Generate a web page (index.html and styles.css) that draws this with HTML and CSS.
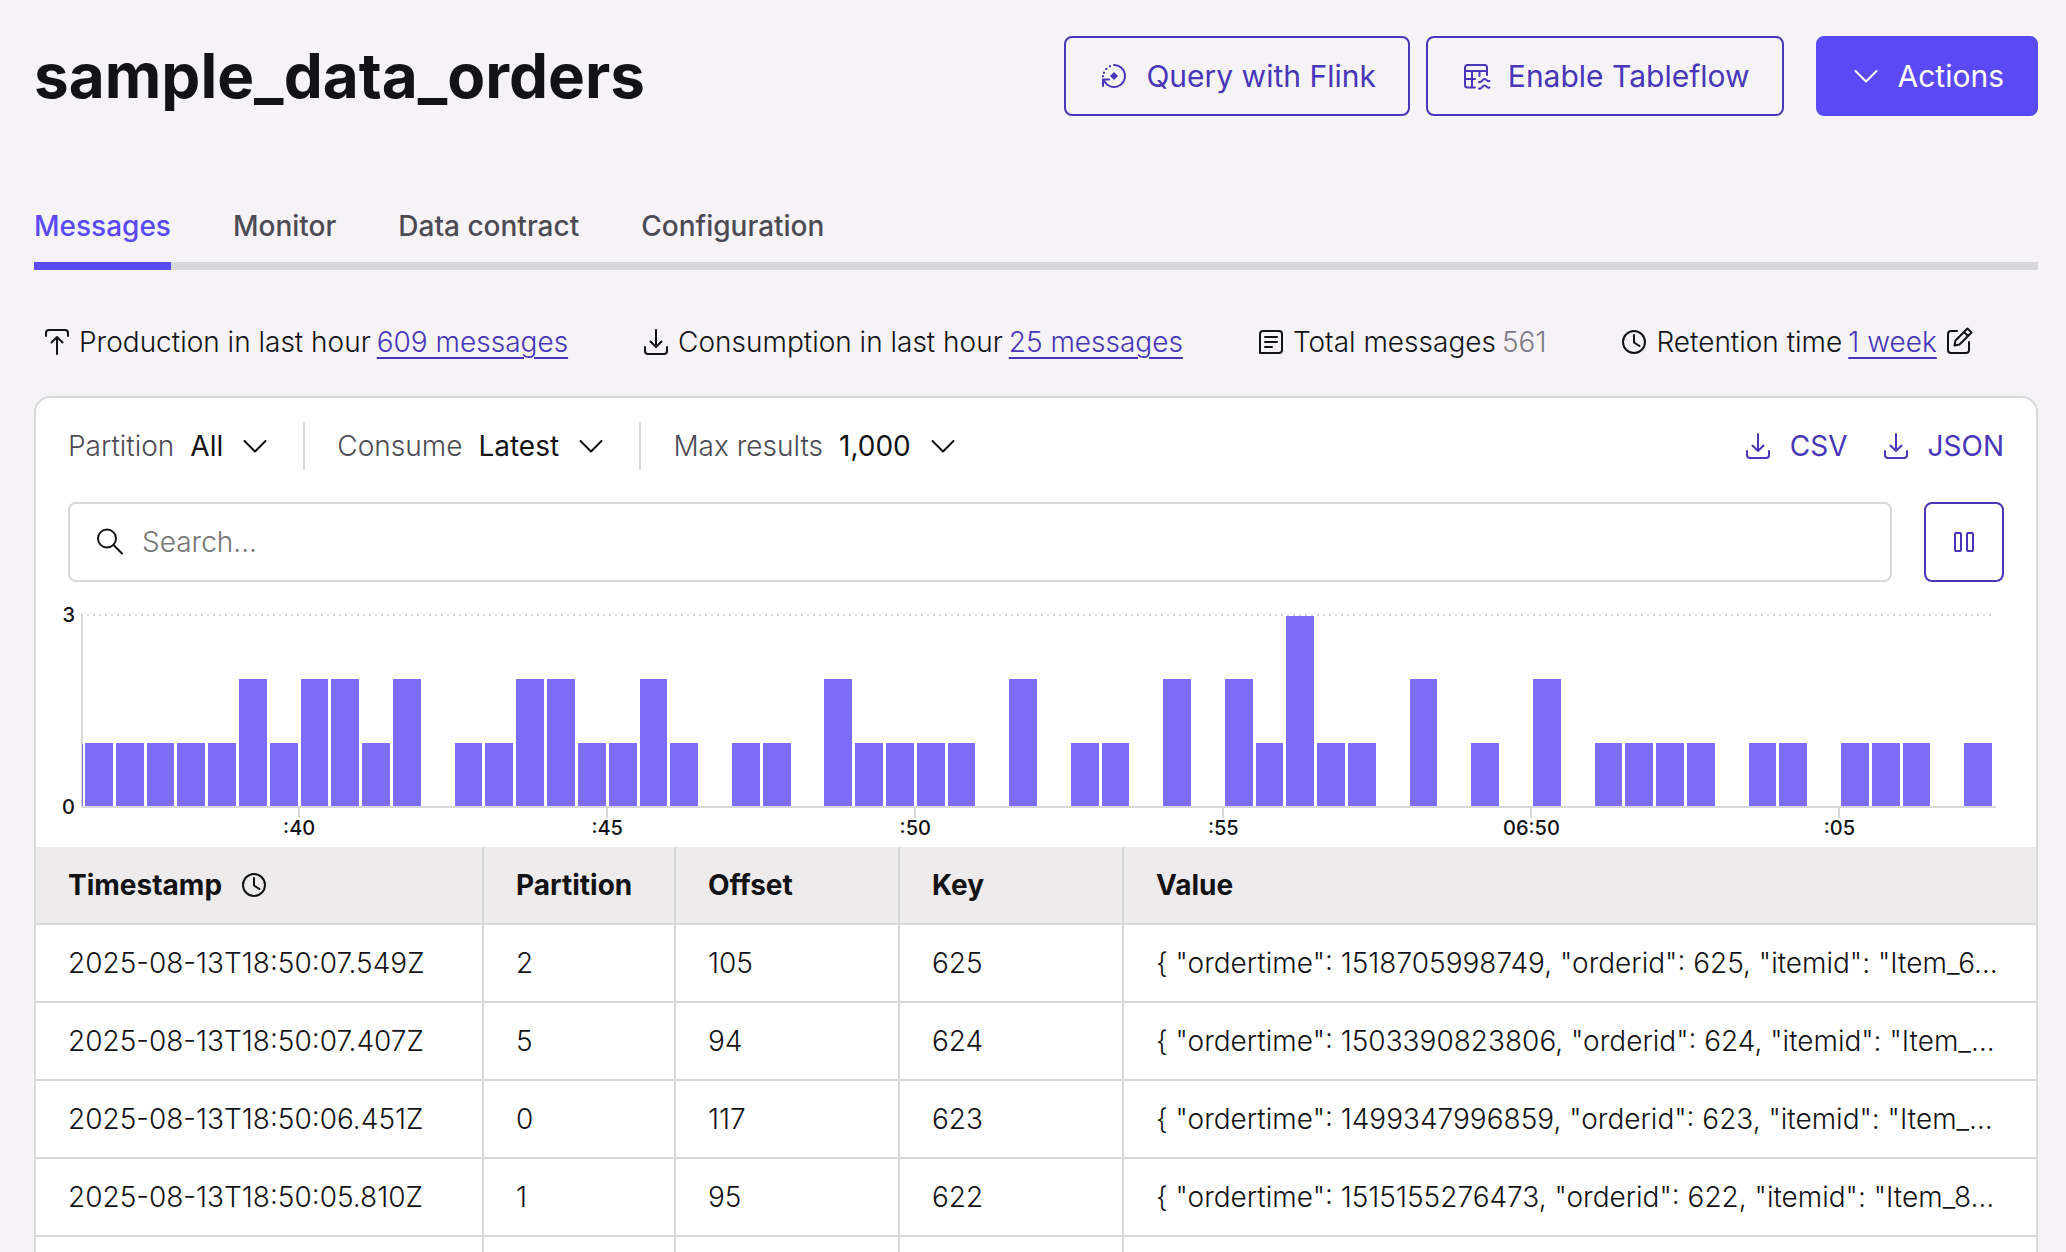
FILE: index.html
```html
<!DOCTYPE html>
<html lang="en">
<head>
<meta charset="utf-8">
<meta name="viewport" content="width=device-width, initial-scale=1">
<title>sample_data_orders</title>
<link rel="stylesheet" href="styles.css">
</head>
<body>
<svg class="sprite" aria-hidden="true">
  <symbol id="i-download" viewBox="0 0 32 32"><path d="M16 4v17M10.500 15.500 16 21l5.500-5.500M5 21v4a3 3 0 0 0 3 3h16a3 3 0 0 0 3-3v-4"/></symbol>
  <symbol id="i-upload" viewBox="0 0 32 32"><path d="M16 28V11M10.500 16.500 16 11l5.500 5.500M5 10V7a3 3 0 0 1 3-3h16a3 3 0 0 1 3 3v3"/></symbol>
  <symbol id="i-clock" viewBox="0 0 32 32"><circle cx="16" cy="16" r="11"/><path d="M16 9v7.500l5.500 3.500"/></symbol>
  <symbol id="i-chevron" viewBox="0 0 32 32"><path d="M5.500 11 16 21.500 26.500 11"/></symbol>
</svg>
<main class="page">
  <header class="page-head">
    <h1>sample_data_orders</h1>
    <div class="head-actions">
      <div class="button-pair">
        <button type="button" class="btn btn-outline">
          <svg class="icon" viewBox="0 0 32 32"><path d="M16 5a11 11 0 1 1-9.500 16.500L5 19.500M5 26v-6.500h6"/><path class="solid" d="m16 12 4 4-4 4-4-4z"/><path class="solid" d="M11 5.300h2v2h-2zM7.300 8h2v2h-2zM5 11.700h2v2H5zM4 15.300h2v2H4z"/></svg>
          Query with Flink
        </button>
        <button type="button" class="btn btn-outline">
          <svg class="icon" viewBox="0 0 32 32"><path d="M15 27.500H7.500A2.500 2.500 0 0 1 5 25V7.500A2.500 2.500 0 0 1 7.500 5h17A2.500 2.500 0 0 1 27 7.500V15M5 11h22M5 19h10M12 11v16.500M19.500 11v5M19 22c3.500 1 3-3 5.500-3s2 3 5 2M19 28.500c3.500 1 3-3 5.500-3s2 3 5 2"/></svg>
          Enable Tableflow
        </button>
      </div>
      <button type="button" class="btn btn-primary"><svg class="icon"><use href="#i-chevron"/></svg>Actions</button>
    </div>
  </header>

  <nav class="tabs">
    <a href="#messages" class="tab is-active" aria-current="page">Messages</a>
    <a href="#monitor" class="tab">Monitor</a>
    <a href="#contract" class="tab">Data contract</a>
    <a href="#configuration" class="tab">Configuration</a>
  </nav>

  <section class="stats">
    <div class="stat"><svg class="icon"><use href="#i-upload"/></svg>Production in last hour <a href="#production">609 messages</a></div>
    <div class="stat"><svg class="icon"><use href="#i-download"/></svg>Consumption in last hour <a href="#consumption">25 messages</a></div>
    <div class="stat"><svg class="icon" viewBox="0 0 32 32"><path d="M8 5h16a3 3 0 0 1 3 3v16a3 3 0 0 1-3 3H5V8a3 3 0 0 1 3-3zM10 11h12M10 16h12M10 21h7"/></svg>Total messages <span class="muted">561</span></div>
    <div class="stat"><svg class="icon"><use href="#i-clock"/></svg>Retention time <a href="#retention">1 week</a><button type="button" class="icon-btn" aria-label="Edit retention time"><svg class="icon" viewBox="0 0 32 32"><path d="M14 5H8a3 3 0 0 0-3 3v16a3 3 0 0 0 3 3h15a3 3 0 0 0 3-3v-8M11.500 19.500l1-5L24.500 2.500l4 4-12 12zM21 6l4 4"/></svg></button></div>
  </section>

  <section class="card">
    <div class="toolbar">
      <div class="filters">
        <div class="filter"><label for="partition">Partition</label><select id="partition"><option>All</option></select><svg class="icon"><use href="#i-chevron"/></svg></div>
        <div class="filter"><label for="consume">Consume</label><select id="consume"><option>Latest</option></select><svg class="icon"><use href="#i-chevron"/></svg></div>
        <div class="filter"><label for="max">Max results</label><select id="max"><option>1,000</option></select><svg class="icon"><use href="#i-chevron"/></svg></div>
      </div>
      <div class="exports">
        <button type="button" class="export"><svg class="icon"><use href="#i-download"/></svg>CSV</button>
        <button type="button" class="export"><svg class="icon"><use href="#i-download"/></svg>JSON</button>
      </div>
    </div>

    <div class="search-row">
      <div class="search">
        <svg class="icon" viewBox="0 0 32 32"><circle cx="13" cy="12.500" r="9"/><path d="m19.500 19 8.500 8.500"/></svg>
        <input type="search" placeholder="Search..." aria-label="Search messages">
      </div>
      <button type="button" class="pause" aria-label="Pause"><svg class="icon" viewBox="0 0 32 32"><rect x="7" y="7" width="6" height="18" rx="1"/><rect x="19" y="7" width="6" height="18" rx="1"/></svg></button>
    </div>

    <div class="chart">
      <div class="y-axis"><span>3</span><span>0</span></div>
      <div class="plot">
        <div class="bars" id="bars"></div>
      </div>
      <div class="x-axis" id="ticks"></div>
    </div>

    <table class="messages">
      <colgroup><col class="c-time"><col class="c-part"><col class="c-off"><col class="c-key"><col></colgroup>
      <thead>
        <tr><th scope="col"><span class="th-icon">Timestamp <svg class="icon"><use href="#i-clock"/></svg></span></th><th scope="col">Partition</th><th scope="col">Offset</th><th scope="col">Key</th><th scope="col">Value</th></tr>
      </thead>
      <tbody>
        <tr><td>2025-08-13T18:50:07.549Z</td><td>2</td><td>105</td><td>625</td><td>{ "ordertime": 1518705998749, "orderid": 625, "itemid": "Item_6…</td></tr>
        <tr><td>2025-08-13T18:50:07.407Z</td><td>5</td><td>94</td><td>624</td><td>{ "ordertime": 1503390823806, "orderid": 624, "itemid": "Item_…</td></tr>
        <tr><td>2025-08-13T18:50:06.451Z</td><td>0</td><td>117</td><td>623</td><td>{ "ordertime": 1499347996859, "orderid": 623, "itemid": "Item_…</td></tr>
        <tr><td>2025-08-13T18:50:05.810Z</td><td>1</td><td>95</td><td>622</td><td>{ "ordertime": 1515155276473, "orderid": 622, "itemid": "Item_8…</td></tr>
        <tr><td></td><td></td><td></td><td></td><td></td></tr>
      </tbody>
    </table>
  </section>
</main>
<script src="chart.js"></script>
</body>
</html>
```
FILE: styles.css
```css
* { box-sizing: border-box; }

:root {
  --ink: #131316;
  --ink-soft: #4c4b54;
  --line: #d8d8da;
  --indigo: #4836b8;
  --violet: #5b49f5;
  --bar: #7d6cf5;
}

body {
  margin: 0;
  background: #f5f3f5;
  color: var(--ink);
  font: 300 28px/36px Inter, "Liberation Sans", sans-serif;
}

h1 { margin: 0; font-size: 62px; line-height: 80px; font-weight: 700; }

button, input, select { font: inherit; color: inherit; }
button { cursor: pointer; }
a { color: var(--indigo); }

.sprite { display: none; }

.icon {
  flex: none;
  width: 32px;
  height: 32px;
  fill: none;
  stroke: currentColor;
  stroke-width: 2;
  stroke-linecap: round;
  stroke-linejoin: round;
}
.icon .solid { fill: currentColor; stroke: none; }

.page {
  height: 100vh;
  padding: 36px 28px 0 34px;
  overflow: hidden;
}

/* Header */
.page-head { display: flex; justify-content: space-between; }
.head-actions { display: flex; gap: 32px; }
.button-pair { display: flex; gap: 16px; }

.btn {
  display: flex;
  align-items: center;
  gap: 16px;
  height: 80px;
  padding: 0 32px;
  border: 2px solid var(--indigo);
  border-radius: 8px;
  background: none;
  color: var(--indigo);
  font-size: 30px;
  font-weight: 400;
  white-space: nowrap;
}
.btn-primary { border-color: var(--violet); background: var(--violet); color: #fff; }

/* Tabs */
.tabs {
  display: flex;
  gap: 62px;
  margin-top: 92px;
  box-shadow: inset 0 -8px var(--line);
}
.tab {
  padding-bottom: 18px;
  border-bottom: 8px solid transparent;
  color: var(--ink-soft);
  font-weight: 500;
  text-decoration: none;
}
.tab.is-active { border-color: var(--violet); color: var(--violet); }

/* Stats */
.stats { display: flex; gap: 72px; padding: 54px 7px 36px; white-space: nowrap; }
.stat { display: flex; align-items: center; gap: 6px; }
.stat a { text-underline-offset: 5px; text-decoration-thickness: 2px; }
.muted { color: #7c7b85; }
.icon-btn { display: flex; padding: 0; border: 0; background: none; }

/* Card */
.card {
  border: 2px solid var(--line);
  border-radius: 16px;
  background: #fff;
  overflow: hidden;
}
.toolbar {
  display: flex;
  justify-content: space-between;
  align-items: center;
  padding: 24px 32px 32px;
  font-weight: 400;
}
.filters, .exports, .filter, .export { display: flex; align-items: center; }
.filter { gap: 16px; height: 48px; color: var(--ink-soft); }
.filter + .filter { margin-left: 32px; padding-left: 32px; border-left: 2px solid var(--line); }
.filter label { font-weight: 300; }
.filter select {
  padding: 0;
  border: 0;
  background: none;
  color: var(--ink);
  appearance: none;
}
.filter .icon { color: var(--ink); }
.exports { gap: 32px; }
.export { gap: 16px; padding: 0; border: 0; background: none; color: var(--indigo); }

.search-row { display: flex; gap: 32px; padding: 0 32px; }
.search {
  flex: 1;
  display: flex;
  align-items: center;
  gap: 16px;
  height: 80px;
  padding: 0 24px;
  border: 2px solid var(--line);
  border-radius: 8px;
}
.search input { flex: 1; min-width: 0; padding: 0; border: 0; background: none; outline: 0; }
.search input::placeholder { color: #757575; opacity: 1; }
.pause {
  display: grid;
  place-items: center;
  width: 80px;
  height: 80px;
  padding: 0;
  border: 2px solid var(--indigo);
  border-radius: 8px;
  background: #fff;
  color: var(--indigo);
}

/* Chart */
.chart {
  display: grid;
  grid-template-columns: 45px 1fr;
  padding: 32px 40px 9px 0;
  font-size: 20px;
  line-height: 20px;
  font-weight: 500;
}
.y-axis {
  display: flex;
  flex-direction: column;
  justify-content: space-between;
  margin: -9px 0;
  padding-right: 6px;
  text-align: right;
}
.plot {
  position: relative;
  height: 194px;
  border-left: 2px solid var(--line);
  border-bottom: 2px solid var(--line);
  background: repeating-linear-gradient(90deg, var(--line) 0 2px, transparent 2px 6px) 4px 0 / calc(100% - 6px) 2px no-repeat;
}
/* Edge of the bar that has scrolled past the axis */
.plot::before {
  content: "";
  position: absolute;
  left: -1px;
  bottom: 0;
  width: 1px;
  height: 62px;
  background: var(--bar);
}
.bars, .x-axis {
  display: grid;
  grid-template-columns: repeat(62, minmax(0, 1fr));
  column-gap: 3px;
}
.bars { align-items: end; height: 100%; padding: 2px 4px 0 2px; }
.bar { background: var(--bar); }
.x-axis { grid-column: 2; padding: 0 4px; }
.tick {
  display: flex;
  flex-direction: column;
  align-items: center;
  white-space: nowrap;
}
.tick::before { content: ""; width: 2px; height: 10px; background: var(--line); }

/* Table */
.messages { width: 100%; border-collapse: separate; border-spacing: 0; table-layout: fixed; }
.c-time { width: 448px; }
.c-part { width: 192px; }
.c-off, .c-key { width: 224px; }
.messages th, .messages td {
  height: 78px;
  padding: 0 32px;
  border-right: 2px solid var(--line);
  border-bottom: 2px solid var(--line);
  text-align: left;
  white-space: nowrap;
}
.messages th:last-child, .messages td:last-child { border-right: 0; }
.messages th { background: #edebec; font-weight: 700; }
.th-icon { display: flex; align-items: center; gap: 16px; }
```
FILE: chart.js
```js
const counts = [
  1, 1, 1, 1, 1, 2, 1, 2, 2, 1, 2, 0, 1, 1, 2, 2, 1, 1, 2, 1, 0,
  1, 1, 0, 2, 1, 1, 1, 1, 0, 2, 0, 1, 1, 0, 2, 0, 2, 1, 3, 1, 1,
  0, 2, 0, 1, 0, 2, 0, 1, 1, 1, 1, 0, 1, 1, 0, 1, 1, 1, 0, 1
];
const ticks = { 7: ":40", 17: ":45", 27: ":50", 37: ":55", 47: "06:50", 57: ":05" };
const highest = Math.max(...counts);

const bars = document.getElementById("bars");
for (const count of counts) {
  const bar = document.createElement("div");
  bar.className = "bar";
  bar.style.height = `${(count / highest) * 100}%`;
  bars.append(bar);
}

const axis = document.getElementById("ticks");
for (const [index, text] of Object.entries(ticks)) {
  const tick = document.createElement("span");
  tick.className = "tick";
  tick.style.gridColumn = `${index - 1} / span 4`;
  tick.textContent = text;
  axis.append(tick);
}
```
